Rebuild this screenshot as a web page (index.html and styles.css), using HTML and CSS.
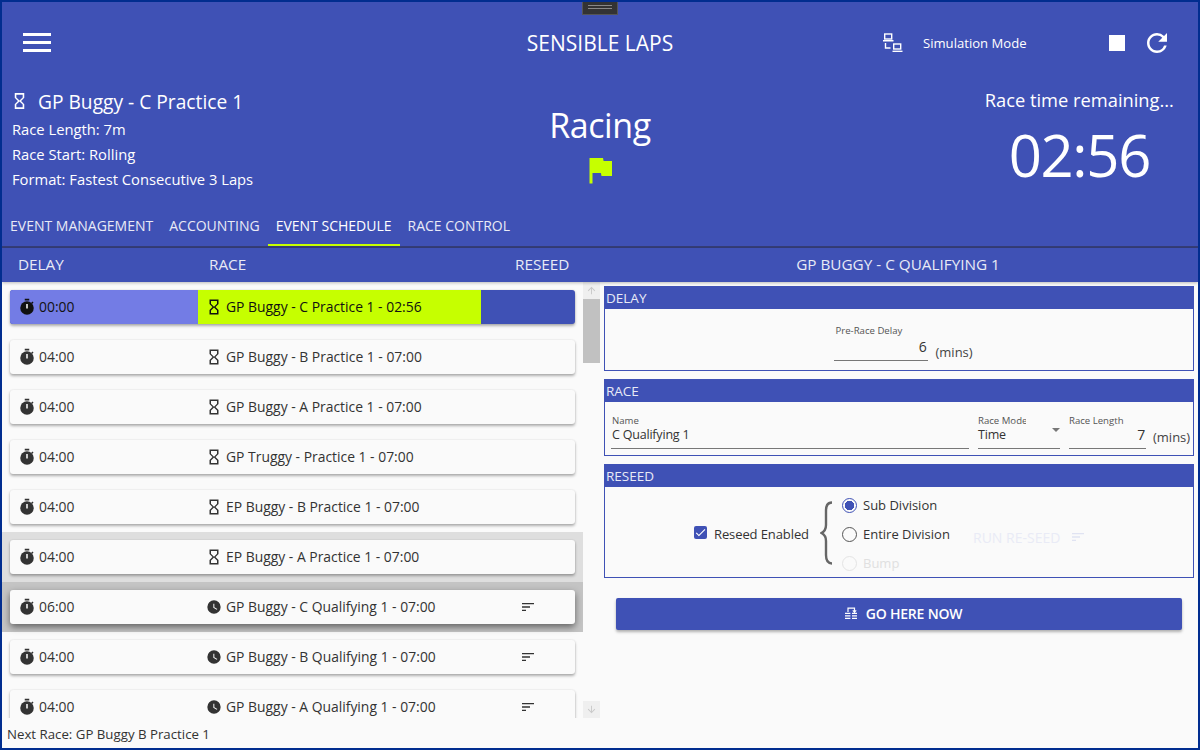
FILE: index.html
```html
<!DOCTYPE html>
<html lang="en">
<head>
<meta charset="utf-8">
<title>Sensible Laps</title>
<link rel="stylesheet" href="styles.css">
</head>
<body>
<svg class="defs" width="0" height="0" aria-hidden="true">
  <symbol id="i-timer" viewBox="0 0 24 24"><path d="M9 1h6v2.2H9z"/><path d="M19.4 4.6l1.3 1.3-1.8 1.8-1.3-1.3z"/><circle cx="12" cy="13.200" r="9"/><rect x="11" y="8" width="2" height="6" fill="#fff"/></symbol>
  <symbol id="i-sand" viewBox="0 0 24 24"><path d="M6,2V8L10,12L6,16V22H18V16L14,12L18,8V2H6M16,16.5V20H8V16.5L12,12.5L16,16.5M12,11.5L8,7.5V4H16V7.5L12,11.5Z"/></symbol>
  <symbol id="i-clock" viewBox="-1.5 -1.5 27 27"><path d="M12 2a10 10 0 1 0 0 20 10 10 0 0 0 0-20zm4.2 14.2L11 13V7h1.5v5.2l4.5 2.7-.8 1.3z"/></symbol>
  <symbol id="i-sort" viewBox="0 0 24 24"><path d="M3 18h6v-2H3v2zM3 6v2h18V6H3zm0 7h12v-2H3v2z"/></symbol>
</svg>

<div class="window">
  <div class="grip"><span></span></div>

  <header class="app-header">
    <div class="toolbar">
      <svg class="burger" viewBox="0 0 28 20"><path d="M0 0h28v3H0zM0 8h28v3H0zM0 16h28v3H0z"/></svg>
      <div class="app-title">SENSIBLE LAPS</div>
      <div class="toolbar-right">
        <svg class="lan" viewBox="0 0 20 20" fill="none" stroke="#fff" stroke-width="1.400"><rect x="1.700" y="1" width="7" height="5"/><path d="M0 7.700h10.500M2.500 10v5h5"/><rect x="10.700" y="11" width="7" height="5"/><path d="M9.500 18.300h10"/></svg>
        <span class="sim">Simulation Mode</span>
        <span class="stop"></span>
        <svg class="refresh" viewBox="0 0 24 24"><path d="M17.65 6.35A7.958 7.958 0 0 0 12 4c-4.42 0-7.99 3.58-7.99 8s3.57 8 7.99 8c3.73 0 6.84-2.55 7.73-6h-2.08A5.99 5.99 0 0 1 12 18c-3.31 0-6-2.69-6-6s2.69-6 6-6c1.66 0 3.14.69 4.22 1.78L13 11h7V4l-2.35 2.35z"/></svg>
      </div>
    </div>

    <div class="info">
      <div class="info-left">
        <div class="race-name"><svg class="race-icon"><use href="#i-sand"/></svg>GP Buggy - C Practice 1</div>
        <div class="info-line">Race Length: 7m</div>
        <div class="info-line">Race Start: Rolling</div>
        <div class="info-line">Format: Fastest Consecutive 3 Laps</div>
      </div>
      <div class="info-center">
        <div class="status">Racing</div>
        <svg class="flag" viewBox="0 0 24 24"><path d="M14.4 6L14 4H5v17h2v-7h5.6l.4 2h7V6z"/></svg>
      </div>
      <div class="info-right">
        <div class="remain">Race time remaining...</div>
        <div class="clock">02:56</div>
      </div>
    </div>

    <nav class="tabs">
      <div class="tab">EVENT MANAGEMENT</div>
      <div class="tab">ACCOUNTING</div>
      <div class="tab tab-active">EVENT SCHEDULE</div>
      <div class="tab">RACE CONTROL</div>
    </nav>
  </header>

  <div class="col-head">
    <div class="col-left">
      <span class="c-delay">DELAY</span>
      <span class="c-race">RACE</span>
      <span class="c-reseed">RESEED</span>
    </div>
    <div class="col-right">GP BUGGY - C QUALIFYING 1</div>
  </div>

  <main class="body">
    <section class="list-pane">
      <div class="list">
        <div class="row">
          <div class="card card-active">
            <div class="cell-delay delay-active"><svg class="ic"><use href="#i-timer"/></svg>00:00</div>
            <div class="cell-race race-active"><svg class="ic"><use href="#i-sand"/></svg>GP Buggy - C Practice 1 - 02:56</div>
            <div class="cell-sort"></div>
          </div>
        </div>
        <div class="row"><div class="card"><div class="cell-delay"><svg class="ic"><use href="#i-timer"/></svg>04:00</div><div class="cell-race"><svg class="ic"><use href="#i-sand"/></svg>GP Buggy - B Practice 1 - 07:00</div><div class="cell-sort"></div></div></div>
        <div class="row"><div class="card"><div class="cell-delay"><svg class="ic"><use href="#i-timer"/></svg>04:00</div><div class="cell-race"><svg class="ic"><use href="#i-sand"/></svg>GP Buggy - A Practice 1 - 07:00</div><div class="cell-sort"></div></div></div>
        <div class="row"><div class="card"><div class="cell-delay"><svg class="ic"><use href="#i-timer"/></svg>04:00</div><div class="cell-race"><svg class="ic"><use href="#i-sand"/></svg>GP Truggy - Practice 1 - 07:00</div><div class="cell-sort"></div></div></div>
        <div class="row"><div class="card"><div class="cell-delay"><svg class="ic"><use href="#i-timer"/></svg>04:00</div><div class="cell-race"><svg class="ic"><use href="#i-sand"/></svg>EP Buggy - B Practice 1 - 07:00</div><div class="cell-sort"></div></div></div>
        <div class="row row-hover"><div class="card"><div class="cell-delay"><svg class="ic"><use href="#i-timer"/></svg>04:00</div><div class="cell-race"><svg class="ic"><use href="#i-sand"/></svg>EP Buggy - A Practice 1 - 07:00</div><div class="cell-sort"></div></div></div>
        <div class="row row-selected"><div class="card card-selected"><div class="cell-delay"><svg class="ic"><use href="#i-timer"/></svg>06:00</div><div class="cell-race"><svg class="ic"><use href="#i-clock"/></svg>GP Buggy - C Qualifying 1 - 07:00</div><div class="cell-sort"><svg class="sort-ic"><use href="#i-sort"/></svg></div></div></div>
        <div class="row"><div class="card"><div class="cell-delay"><svg class="ic"><use href="#i-timer"/></svg>04:00</div><div class="cell-race"><svg class="ic"><use href="#i-clock"/></svg>GP Buggy - B Qualifying 1 - 07:00</div><div class="cell-sort"><svg class="sort-ic"><use href="#i-sort"/></svg></div></div></div>
        <div class="row"><div class="card"><div class="cell-delay"><svg class="ic"><use href="#i-timer"/></svg>04:00</div><div class="cell-race"><svg class="ic"><use href="#i-clock"/></svg>GP Buggy - A Qualifying 1 - 07:00</div><div class="cell-sort"><svg class="sort-ic"><use href="#i-sort"/></svg></div></div></div>
      </div>
      <div class="scrollbar">
        <div class="sb-btn"><svg viewBox="0 0 24 24"><path d="M4 12l1.41 1.41L11 7.83V20h2V7.83l5.58 5.59L20 12l-8-8z"/></svg></div>
        <div class="sb-thumb"></div>
        <div class="sb-track"></div>
        <div class="sb-btn"><svg viewBox="0 0 24 24"><path d="M20 12l-1.41-1.41L13 16.17V4h-2v12.17l-5.58-5.59L4 12l8 8z"/></svg></div>
      </div>
    </section>

    <section class="detail">
      <div class="group group-delay">
        <div class="group-head">DELAY</div>
        <div class="group-body delay-body">
          <div class="field field-pre">
            <label>Pre-Race Delay</label>
            <div class="value value-right">6</div>
          </div>
          <span class="unit">(mins)</span>
        </div>
      </div>

      <div class="group group-race">
        <div class="group-head">RACE</div>
        <div class="group-body race-body">
          <div class="field field-name">
            <label>Name</label>
            <div class="value">C Qualifying 1</div>
          </div>
          <div class="field field-mode">
            <label>Race Mode</label>
            <div class="value">Time<span class="caret"></span></div>
          </div>
          <div class="field field-len">
            <label>Race Length</label>
            <div class="value value-right">7</div>
          </div>
          <span class="unit unit-race">(mins)</span>
        </div>
      </div>

      <div class="group group-reseed">
        <div class="group-head">RESEED</div>
        <div class="group-body reseed-body">
          <div class="check"><span class="box"><svg viewBox="0 0 24 24"><path d="M9 16.2L4.8 12l-1.4 1.4L9 19 21 7l-1.4-1.4z"/></svg></span>Reseed Enabled</div>
          <svg class="brace" viewBox="0 0 14 64" fill="none"><path d="M12 1.500C7 1.500 6 5 6 10v14c0 4-1.500 6.500-4.500 8C4.500 33.500 6 36 6 40v14c0 5 1 8.500 6 8.500" stroke="#666" stroke-width="2.400"/></svg>
          <div class="radios">
            <div class="radio radio-on"><span class="dot"></span>Sub Division</div>
            <div class="radio"><span class="dot"></span>Entire Division</div>
            <div class="radio radio-off"><span class="dot"></span>Bump</div>
          </div>
          <div class="run">RUN RE-SEED<svg class="run-ic"><use href="#i-sort"/></svg></div>
        </div>
      </div>

      <button class="go" type="button">
        <svg class="go-ic" viewBox="0 0 12 12" fill="none" stroke="#fff" stroke-width="1.200"><path d="M3 5V1.200h6.500V4.500M7.800 3.300l1.700 1.800 1.700-1.800M0 6.400h5.400M7 6.400h5M0 8.800h5.400M7 8.800h5M0 11.300h5.400M7 11.300h5"/></svg>GO HERE NOW
      </button>
    </section>
  </main>

  <footer class="status-bar">Next Race: GP Buggy B Practice 1</footer>
</div>
</body>
</html>
```
FILE: styles.css
```css
* { box-sizing: border-box; }
html, body { margin: 0; height: 100%; }
body { font-family: "Open Sans", "Noto Sans", sans-serif; color: #303030; background: #fafafa; overflow: hidden; }
.defs { position: absolute; }

.window { position: relative; width: 1200px; height: 750px; border: 2px solid #012d8f; background: #fafafa; display: flex; flex-direction: column; overflow: hidden; }
.grip { position: absolute; top: -2px; left: 580px; width: 36px; height: 15px; background: #333; border: 1px solid #555; border-top: 0; display: flex; align-items: center; justify-content: center; }
.grip span { width: 24px; height: 4px; border-top: 1px solid #888; border-bottom: 1px solid #888; }

.app-header { background: #3f51b5; color: #fff; height: 246px; flex: none; display: flex; flex-direction: column; border-bottom: 2px solid #353d78; }
.toolbar { height: 82px; flex: none; display: grid; grid-template-columns: 1fr auto 1fr; align-items: center; padding: 0 21px; }
.burger { width: 28px; height: 20px; fill: #fff; }
.app-title { font-size: 21px; }
.toolbar-right { justify-self: end; display: flex; align-items: center; padding-right: 5px; }
.lan { width: 20px; height: 20px; margin-right: 20px; }
.sim { font-size: 13.1px; width: 186px; }
.stop { width: 16px; height: 16px; background: #fff; margin-right: 17px; }
.refresh { width: 30px; height: 30px; fill: #fff; }

.info { height: 132px; flex: none; display: grid; grid-template-columns: 1fr 1fr 1fr; padding-left: 10px; }
.info-left { display: flex; flex-direction: column; }
.race-name { font-size: 19.2px; height: 34px; margin-bottom: -1px; display: flex; align-items: center; }
.race-icon { width: 19px; height: 20px; fill: #fff; margin: 0 9px 0 -2px; }
.info-line { font-size: 14.75px; line-height: 25px; }
.info-center { display: flex; flex-direction: column; align-items: center; padding: 18px 10px 0 0; }
.status { font-size: 34px; letter-spacing: -0.4px; line-height: 46px; }
.flag { width: 36px; height: 36px; fill: #c6ff00; margin-top: 4px; }
.info-right { display: flex; flex-direction: column; align-items: center; padding: 1px 0 0 158px; }
.remain { font-size: 18.3px; line-height: 30px; }
.clock { font-size: 58px; letter-spacing: -1.3px; line-height: 80px; }

.tabs { display: flex; height: 30px; flex: none; }
.tab { padding: 0 8px; font-size: 14px; line-height: 20px; color: #e9eaf6; height: 30px; }
.tab-active { color: #fff; border-bottom: 2px solid #c6ff00; }

.col-head { height: 34px; flex: none; padding-bottom: 2px; background: #3f51b5; color: #e8eaf6; display: flex; align-items: center; font-size: 15.3px; box-shadow: 0 1px 3px rgba(0,0,0,.25); position: relative; z-index: 2; }
.col-left { width: 596px; display: flex; }
.c-delay { margin-left: 16px; width: 191px; }
.c-race { width: 306px; }
.col-right { flex: 1; text-align: center; }

.body { flex: 1; min-height: 0; display: flex; }
.list-pane { width: 598px; height: 436px; flex: none; display: flex; overflow: hidden; }
.list { width: 581px; flex: none; overflow: hidden; }
.row { height: 50px; padding: 8px; }
.row-hover { background: #dedede; }
.row-selected { background: #c4c4c4; }
.card { height: 34px; background: #fafafa; border-radius: 3px; display: grid; grid-template-columns: 188px 283px 94px; width: 565px; box-shadow: 0 2px 3px rgba(0,0,0,.3), 0 0 2px rgba(0,0,0,.12); font-size: 13.9px; color: #333; overflow: hidden; }
.card-selected { box-shadow: 0 3px 7px rgba(0,0,0,.5); }
.card-active { background: #3f51b5; color: #111; }
.cell-delay, .cell-race, .cell-sort { display: flex; align-items: center; padding-bottom: 1px; }
.cell-delay { padding-left: 8px; }
.delay-active { background: #737ce5; }
.cell-race { padding-left: 7px; }
.race-active { background: #c6ff00; }
.cell-sort { padding-left: 39px; }
.ic { width: 18px; height: 18px; fill: currentColor; margin-right: 3px; flex: none; }
.sort-ic { width: 16px; height: 16px; fill: currentColor; flex: none; }

.scrollbar { width: 17px; flex: none; display: flex; flex-direction: column; background: #fafafa; }
.sb-btn { height: 17px; background: #efefef; display: flex; align-items: center; justify-content: center; flex: none; }
.sb-btn svg { width: 11px; height: 11px; fill: #c8c8c8; }
.sb-thumb { height: 64px; background: #c1c1c1; flex: none; }
.sb-track { flex: 1; }

.detail { flex: 1; padding: 4px 4px 0; display: flex; flex-direction: column; }
.group { border: 1px solid #3f51b5; flex: none; }
.group-head { height: 22px; background: #3f51b5; color: #e8eaf6; font-size: 13.5px; line-height: 22px; padding-left: 1px; }
.group-delay { height: 85px; margin-bottom: 8px; }
.group-race { height: 77px; margin-bottom: 8px; }
.group-reseed { height: 114px; margin-bottom: 20px; }
.group-body { display: flex; }
.delay-body { justify-content: center; padding: 16px 0 0 8px; align-items: flex-end; gap: 8px; }
.field label { display: block; font-size: 9.6px; color: #555; line-height: 12px; white-space: nowrap; overflow: hidden; }
.value { font-size: 12.5px; letter-spacing: -0.2px; line-height: 16px; height: 22px; border-bottom: 1px solid #777; color: #333; position: relative; }
.value-right { text-align: right; }
.field-pre { width: 94px; }
.field-pre label { padding-left: 2px; }
.field-pre .value { font-size: 14px; line-height: 20px; height: 24px; padding-right: 1px; }
.unit { font-size: 13px; color: #444; line-height: 18px; }
.unit-race { margin-bottom: 3px; }
.race-body { padding: 13px 3px 0 6px; align-items: flex-end; }
.field-name { width: 358px; margin-right: 9px; }
.field-name label, .field-name .value { padding-left: 1px; }
.field-mode { width: 82px; margin-right: 9px; }
.field-mode label { width: 48px; }
.caret { position: absolute; right: 0; top: 1px; width: 0; height: 0; border-left: 4px solid transparent; border-right: 4px solid transparent; border-top: 4px solid #777; }
.field-len { width: 77px; margin-right: 7px; }
.field-len .value { font-size: 14px; padding-right: 1px; }

.reseed-body { height: 90px; align-items: center; padding: 4px 0 0 89px; color: #333; font-size: 13px; }
.check { display: flex; align-items: center; width: 116px; letter-spacing: -0.1px; }
.box { width: 13px; height: 13px; background: #3f51b5; border-radius: 2px; margin: 0 7px 4px 0; display: flex; flex: none; }
.box svg { width: 13px; height: 13px; fill: #fff; }
.brace { width: 14px; height: 64px; margin: 0 8px 2px 10px; flex: none; }
.radios { width: 131px; display: flex; flex-direction: column; }
.radio { display: flex; align-items: center; height: 29px; }
.dot { width: 15px; height: 15px; border: 1.5px solid #555; border-radius: 50%; margin-right: 6px; flex: none; }
.radio-on .dot { border-color: #3f51b5; background: radial-gradient(circle, #3f51b5 0 4.5px, transparent 5px); }
.radio-off { color: #e0e0e0; }
.radio-off .dot { border-color: #e4e4e4; }
.run { color: #e9ebf6; display: flex; align-items: center; font-size: 14px; margin-top: 6px; }
.run-ic { margin-left: 10px; fill: #e0e3f2; width: 16px; height: 16px; }

.go { margin: 0 0 0 12px; width: 566px; height: 32px; padding: 0 0 2px 9px; background: #3f51b5; color: #fff; border: 0; border-radius: 2px; display: flex; align-items: center; justify-content: center; font-family: inherit; font-size: 14px; font-weight: 600; letter-spacing: -0.2px; box-shadow: 0 2px 3px rgba(0,0,0,.3); }
.go-ic { width: 12px; height: 12px; margin-right: 9px; }

.status-bar { height: 30px; flex: none; margin-top: auto; padding-left: 5px; font-size: 13.25px; color: #333; line-height: 33px; }
```
